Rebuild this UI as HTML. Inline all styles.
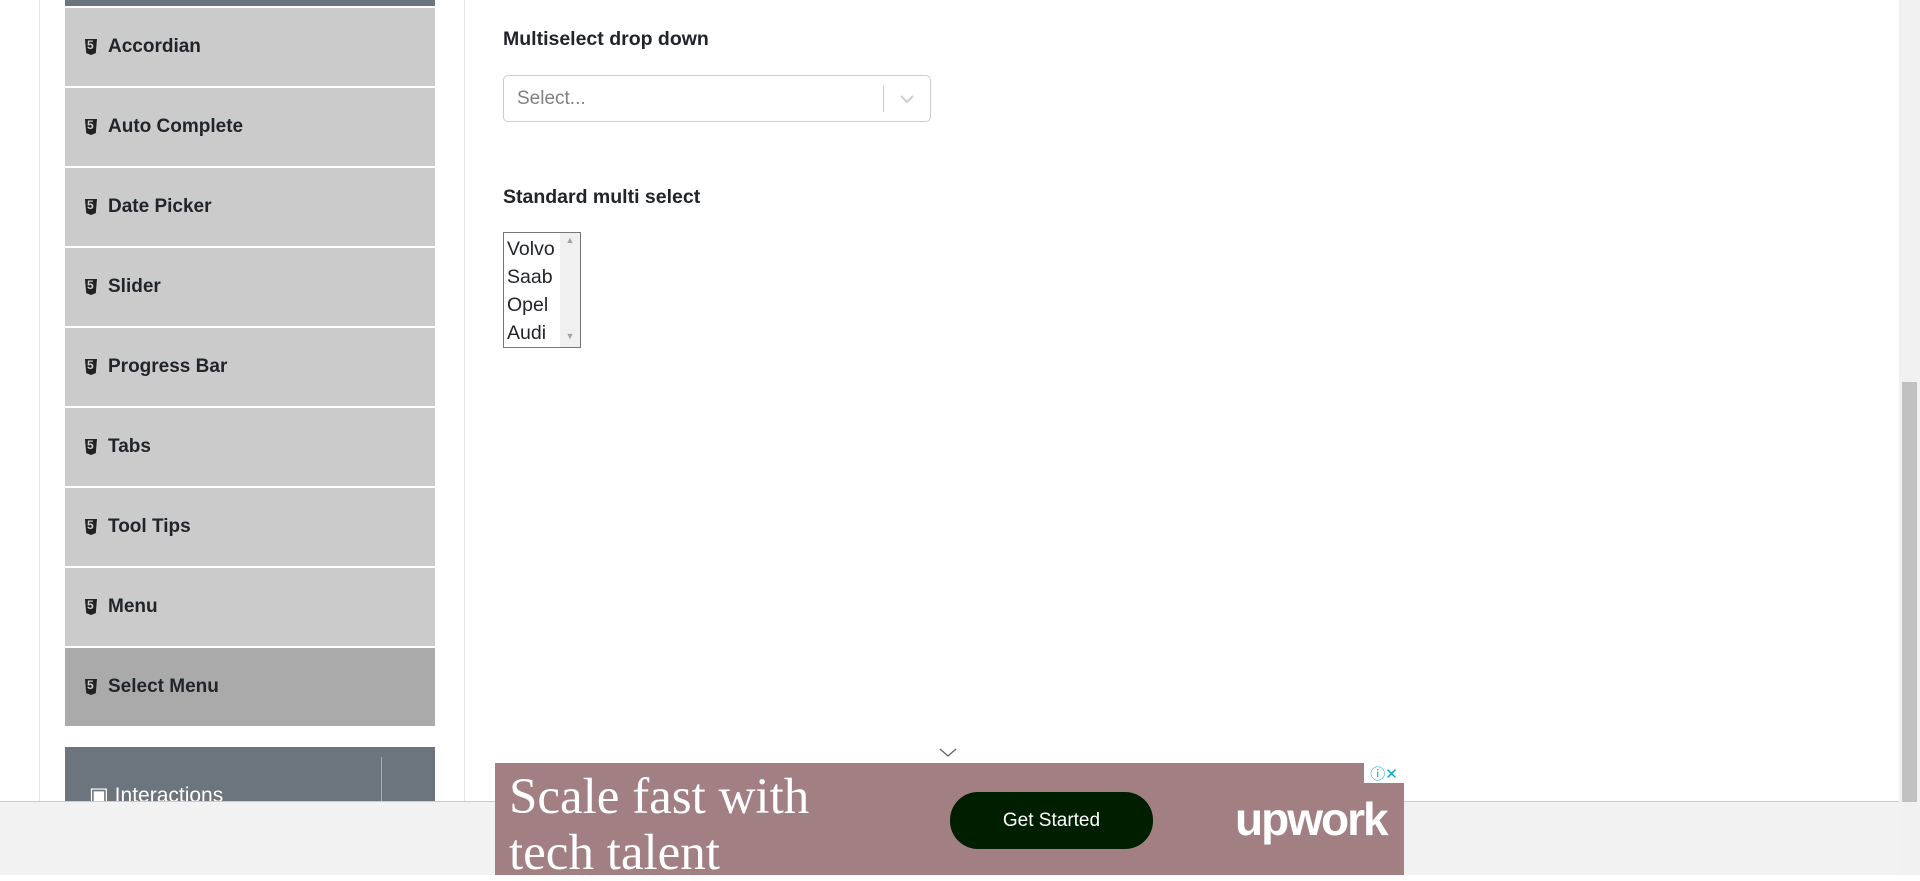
<!DOCTYPE html>
<html><head><meta charset="utf-8"><style>
*{box-sizing:border-box;margin:0;padding:0}
body{width:1920px;height:875px;overflow:hidden;background:#fff;font-family:"Liberation Sans",sans-serif;position:relative;color:#212529}
.vl{position:absolute;top:0;width:1px;background:#e6e6e6}
.item{position:absolute;left:65px;width:370px;height:78px;background:#cbcbcb;font-weight:bold;font-size:19px;display:flex;align-items:center;padding-left:20px}
.item .ic{display:inline-block;width:12px;height:16px;background:#222;margin-right:11px;clip-path:polygon(0 0,100% 0,90% 88%,50% 100%,10% 88%);position:relative}
.item .ic:after{content:"5";position:absolute;left:2px;top:-1px;color:#cbcbcb;font-size:12px;font-weight:bold}
h5{position:absolute;left:503px;font-size:19.5px;font-weight:bold;color:#212529}
</style></head><body>
<div class="vl" style="left:39px;height:801px"></div>
<div class="vl" style="left:464px;height:801px"></div>
<div style="position:absolute;left:65px;top:0;width:370px;height:6px;background:#6c757d"></div>
<div class="item" style="top:8px"><span class="ic"></span>Accordian</div>
<div class="item" style="top:88px"><span class="ic"></span>Auto Complete</div>
<div class="item" style="top:168px"><span class="ic"></span>Date Picker</div>
<div class="item" style="top:248px"><span class="ic"></span>Slider</div>
<div class="item" style="top:328px"><span class="ic"></span>Progress Bar</div>
<div class="item" style="top:408px"><span class="ic"></span>Tabs</div>
<div class="item" style="top:488px"><span class="ic"></span>Tool Tips</div>
<div class="item" style="top:568px"><span class="ic"></span>Menu</div>
<div class="item" style="top:648px;background:#aaa"><span class="ic"></span>Select Menu</div>
<div style="position:absolute;left:65px;top:747px;width:370px;height:60px;background:#6c757d;color:#fff;font-size:21px">
<div style="position:absolute;left:316px;top:10px;width:1px;height:50px;background:#aab"></div>
<div style="position:absolute;left:24px;top:36px">▣ Interactions</div></div>
<h5 style="top:28px">Multiselect drop down</h5>
<div style="position:absolute;left:503px;top:75px;width:428px;height:47px;border:1px solid #ccc;border-radius:5px">
<span style="position:absolute;left:13px;top:12px;font-size:19px;color:#808080">Select...</span>
<div style="position:absolute;left:379px;top:9px;width:1px;height:27px;background:#ccc"></div>
<svg style="position:absolute;left:395px;top:16px" width="16" height="14" viewBox="0 0 16 14"><path d="M2 4l6 6 6-6" fill="none" stroke="#ccc" stroke-width="2"/></svg></div>
<h5 style="top:186px">Standard multi select</h5>
<div style="position:absolute;left:503px;top:232px;width:78px;height:116px;border:1px solid #767676;font-size:19.5px;line-height:28px;padding:2px 0 0 3px">
Volvo<br>Saab<br>Opel<br>Audi
<div style="position:absolute;right:0;top:0;width:20px;height:100%;background:#f0f0f0;color:#a3a3a3;font-size:9px;text-align:center;line-height:14px">▲<div style="position:absolute;bottom:4px;width:20px">▼</div></div></div>
<svg style="position:absolute;left:939px;top:748px" width="18" height="10"><path d="M1 1l8 7 8-7" fill="none" stroke="#666" stroke-width="1.3"/></svg>
<div style="position:absolute;left:0;top:801px;width:1899px;height:74px;background:#f2f2f2;border-top:1px solid #ccc"></div>
<div style="position:absolute;left:1899px;top:0;width:21px;height:875px;background:#f1f1f1"><div style="position:absolute;left:3px;top:382px;width:15px;height:420px;background:#c1c1c1"></div></div>
<div style="position:absolute;left:495px;top:763px;width:909px;height:112px;background:#a17f83;color:#fff">
<div style="position:absolute;left:14px;top:6px;font-family:'Liberation Serif',serif;font-size:51px;line-height:56px">Scale fast with<br>tech talent</div>
<div style="position:absolute;left:455px;top:29px;width:203px;height:57px;border-radius:28px;background:#001e00;font-size:19px;text-align:center;line-height:57px">Get Started</div>
<div style="position:absolute;left:740px;top:29px;font-size:46px;font-weight:bold;letter-spacing:-2px">upwork</div>
<div style="position:absolute;right:0;top:0;width:40px;height:20px;background:#fff;color:#00aecd;font-size:15px;text-align:center">ⓘ✕</div></div>
</body></html>
